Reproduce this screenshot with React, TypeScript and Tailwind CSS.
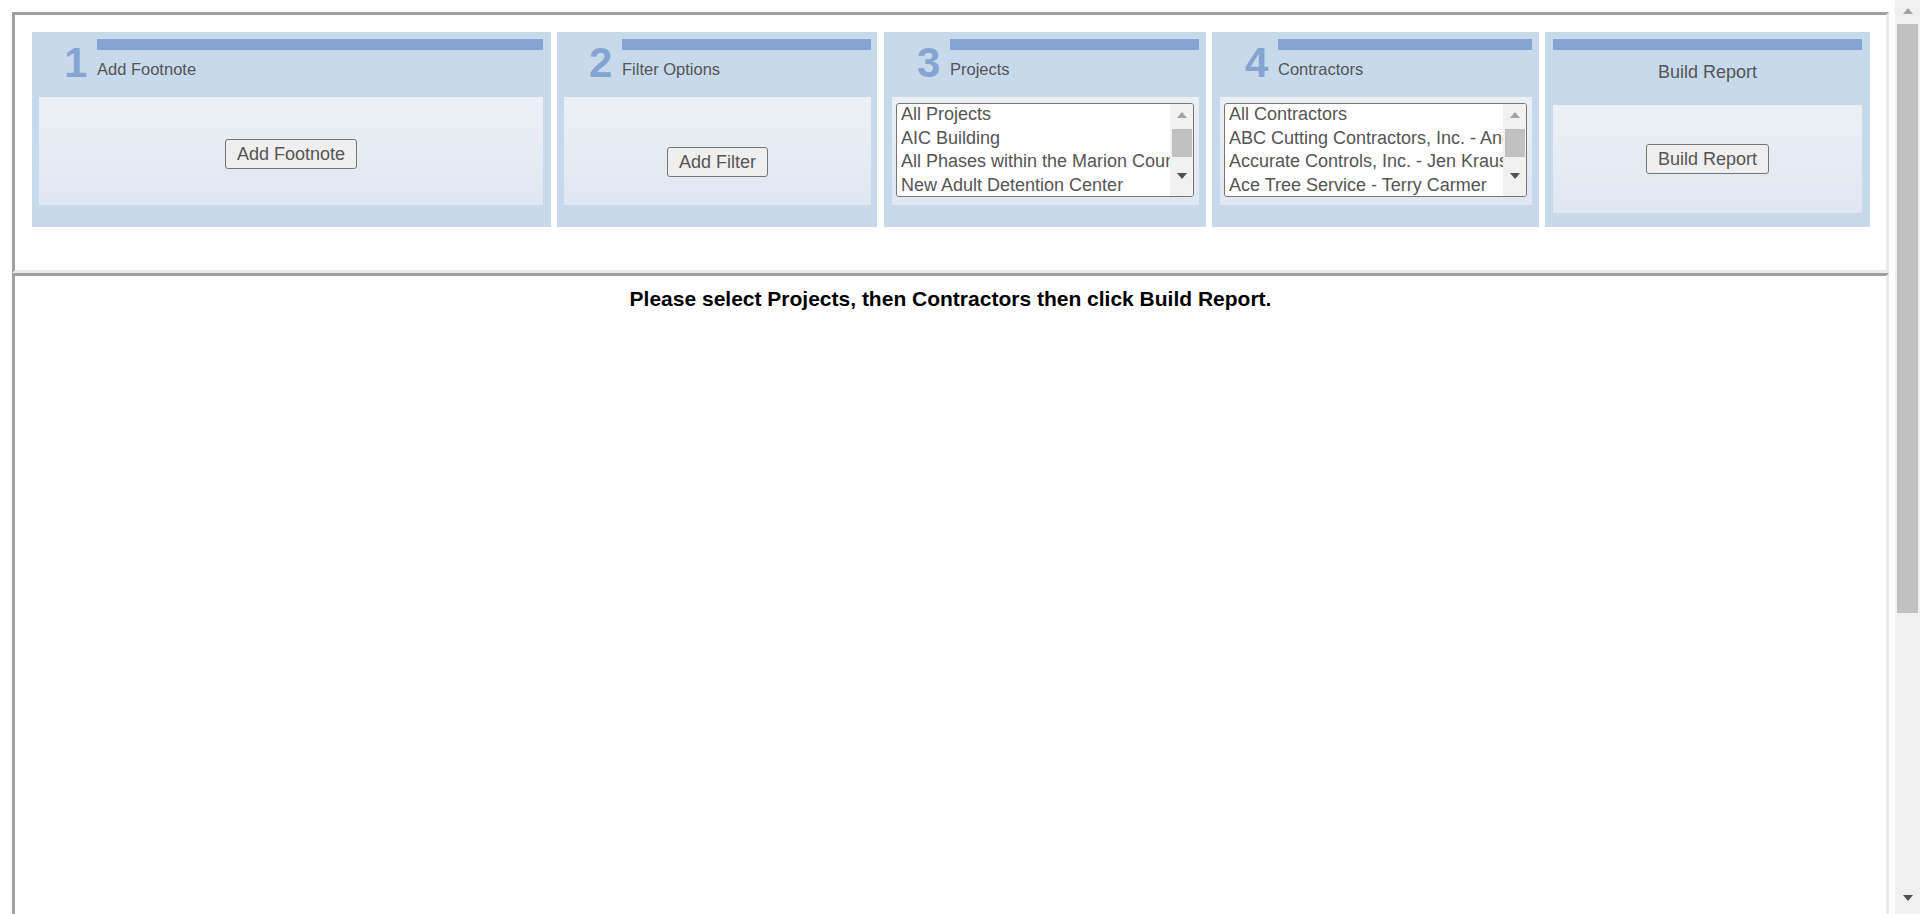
import React from 'react';

const ArrowUp = ({ color }: { color: string }) => (
  <svg width="10" height="6" viewBox="0 0 10 6">
    <path d="M0 6 L5 0 L10 6 Z" fill={color} />
  </svg>
);

const ArrowDown = ({ color }: { color: string }) => (
  <svg width="10" height="6" viewBox="0 0 10 6">
    <path d="M0 0 L10 0 L5 6 Z" fill={color} />
  </svg>
);

const ListBox = ({ items }: { items: string[] }) => (
  <div className="flex h-[94px] w-full overflow-hidden rounded-[3px] border border-[#767676] bg-white">
    <div className="flex-1 overflow-hidden whitespace-nowrap pl-[4px] text-[18px] leading-[19px] text-[#555]">
      {items.map((item) => (
        <div key={item} className="h-[23.5px] pt-[1px]">
          {item}
        </div>
      ))}
    </div>
    {/* listbox scrollbar */}
    <div className="flex w-[23px] flex-col items-center bg-[#f1f1f1]">
      <div className="flex h-[22px] items-center justify-center">
        <ArrowUp color="#a3a3a3" />
      </div>
      <div className="mt-[3px] h-[28px] w-[20px] bg-[#c1c1c1]"></div>
      <div className="flex-1"></div>
      <div className="mb-[12px] flex h-[16px] items-center justify-center">
        <ArrowDown color="#505050" />
      </div>
    </div>
  </div>
);

const StepHeader = ({ num, label }: { num: string; label: string }) => (
  <div className="flex h-[58px]">
    <div className="w-[58px] pl-[25px] text-[42px] font-bold leading-[48px] text-[#84a5d1]">{num}</div>
    <div className="flex-1">
      <div className="h-[11px] bg-[#84a5d1]"></div>
      <div className="mt-[10px] text-[16.5px] leading-[18px] text-[#555]">{label}</div>
    </div>
  </div>
);

const Btn = ({ children }: { children: React.ReactNode }) => (
  <button className="h-[30px] rounded-[3px] border border-[#767676] bg-[#efefef] px-[11px] text-[18px] leading-[20px] text-[#555]">
    {children}
  </button>
);

const App: React.FC = () => {
  const projects = [
    'All Projects',
    'AIC Building',
    'All Phases within the Marion County Jail Complex',
    'New Adult Detention Center',
    'Public Safety Building',
  ];
  const contractors = [
    'All Contractors',
    'ABC Cutting Contractors, Inc. - Andy Brown',
    'Accurate Controls, Inc. - Jen Krause',
    'Ace Tree Service - Terry Carmer',
    'Allied Electric - Bob Miller',
  ];

  return (
    <div className="flex h-[914px] w-full overflow-hidden bg-white font-['Liberation_Sans',Arial,sans-serif]">
      <div className="flex-1 pl-[12px] pt-[12px]">
        {/* top frame */}
        <div className="h-[261px] w-[1877px] border-[3px] border-t-[#a0a0a0] border-l-[#a0a0a0] border-r-[#e9e9e9] border-b-[#e9e9e9] pl-[17px] pt-[17px]">
          <div className="flex">
            {/* 1 */}
            <div className="h-[195px] w-[519px] bg-[#c9d9ec] pl-[7px] pr-[8px] pt-[7px]">
              <StepHeader num="1" label="Add Footnote" />
              <div className="flex h-[108px] justify-center bg-gradient-to-b from-[#ecf0f5] to-[#e0e7f1] pt-[42px]">
                <div>
                  <Btn>Add Footnote</Btn>
                </div>
              </div>
            </div>

            {/* 2 */}
            <div className="ml-[6px] h-[195px] w-[320px] bg-[#c9d9ec] pl-[7px] pr-[6px] pt-[7px]">
              <StepHeader num="2" label="Filter Options" />
              <div className="flex h-[108px] justify-center bg-gradient-to-b from-[#ecf0f5] to-[#e0e7f1] pt-[50px]">
                <div>
                  <Btn>Add Filter</Btn>
                </div>
              </div>
            </div>

            {/* 3 */}
            <div className="ml-[7px] h-[195px] w-[322px] bg-[#c9d9ec] pl-[8px] pr-[7px] pt-[7px]">
              <StepHeader num="3" label="Projects" />
              <div className="h-[108px] bg-gradient-to-b from-[#ecf0f5] to-[#e0e7f1] pl-[4px] pr-[5px] pt-[6px]">
                <ListBox items={projects} />
              </div>
            </div>

            {/* 4 */}
            <div className="ml-[6px] h-[195px] w-[327px] bg-[#c9d9ec] pl-[8px] pr-[7px] pt-[7px]">
              <StepHeader num="4" label="Contractors" />
              <div className="h-[108px] bg-gradient-to-b from-[#ecf0f5] to-[#e0e7f1] pl-[4px] pr-[5px] pt-[6px]">
                <ListBox items={contractors} />
              </div>
            </div>

            {/* build */}
            <div className="ml-[6px] h-[195px] w-[325px] bg-[#c9d9ec] px-[8px] pt-[7px]">
              <div className="h-[66px]">
                <div className="h-[11px] bg-[#84a5d1]"></div>
                <div className="mt-[12px] text-center text-[18px] leading-[21px] text-[#555]">Build Report</div>
              </div>
              <div className="flex h-[108px] justify-center bg-gradient-to-b from-[#ecf0f5] to-[#e0e7f1] pt-[39px]">
                <div>
                  <Btn>Build Report</Btn>
                </div>
              </div>
            </div>
          </div>
        </div>

        {/* bottom frame */}
        <div className="h-[700px] w-[1877px] border-[3px] border-t-[#a0a0a0] border-l-[#a0a0a0] border-r-[#e9e9e9] border-b-[#e9e9e9] pt-[11px] text-center">
          <p className="text-[21px] font-bold leading-[24px] text-black">
            Please select Projects, then Contractors then click Build Report.
          </p>
        </div>
      </div>

      {/* page scrollbar */}
      <div className="flex w-[25px] flex-col items-center bg-[#f0f0f0]">
        <div className="flex h-[22px] items-center justify-center">
          <ArrowUp color="#a3a3a3" />
        </div>
        <div className="mt-[2px] h-[589px] w-[21px] bg-[#c1c1c1]"></div>
        <div className="flex-1"></div>
        <div className="mb-[8px] flex h-[16px] items-center justify-center">
          <ArrowDown color="#505050" />
        </div>
      </div>
    </div>
  );
};

export default App;
